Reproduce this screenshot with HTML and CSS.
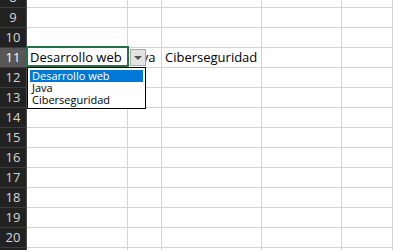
FILE: index.html
```html
<!DOCTYPE html>
<html lang="es">
<head>
  <meta charset="UTF-8">
  <meta name="viewport" content="width=device-width, initial-scale=1.0">
  <title>Hoja de cálculo - lista desplegable</title>
  <link rel="stylesheet" href="styles.css">
</head>
<body>
  <div class="sheet">
    <div class="row"><div class="rh">8</div><div class="c col-a"></div><div class="c col-b"></div><div class="c col-c"></div><div class="c col-d"></div><div class="c col-e"></div></div>
    <div class="row"><div class="rh">9</div><div class="c col-a"></div><div class="c col-b"></div><div class="c col-c"></div><div class="c col-d"></div><div class="c col-e"></div></div>
    <div class="row"><div class="rh">10</div><div class="c col-a"></div><div class="c col-b"></div><div class="c col-c"></div><div class="c col-d"></div><div class="c col-e"></div></div>

    <div class="row active">
      <div class="rh">11</div>
      <div class="c col-a">Desarrollo web</div>
      <div class="c col-b">Java</div>
      <div class="c col-c">Ciberseguridad</div>
      <div class="c col-d"></div>
      <div class="c col-e"></div>

      <!-- celda seleccionada + lista de validacion -->
      <div class="selection"></div>
      <div class="drop-btn"><span class="arrow"></span></div>
      <ul class="drop-list">
        <li class="selected">Desarrollo web</li>
        <li>Java</li>
        <li>Ciberseguridad</li>
      </ul>
    </div>

    <div class="row"><div class="rh">12</div><div class="c col-a"></div><div class="c col-b"></div><div class="c col-c"></div><div class="c col-d"></div><div class="c col-e"></div></div>
    <div class="row"><div class="rh">13</div><div class="c col-a"></div><div class="c col-b"></div><div class="c col-c"></div><div class="c col-d"></div><div class="c col-e"></div></div>
    <div class="row"><div class="rh">14</div><div class="c col-a"></div><div class="c col-b"></div><div class="c col-c"></div><div class="c col-d"></div><div class="c col-e"></div></div>
    <div class="row"><div class="rh">15</div><div class="c col-a"></div><div class="c col-b"></div><div class="c col-c"></div><div class="c col-d"></div><div class="c col-e"></div></div>
    <div class="row"><div class="rh">16</div><div class="c col-a"></div><div class="c col-b"></div><div class="c col-c"></div><div class="c col-d"></div><div class="c col-e"></div></div>
    <div class="row"><div class="rh">17</div><div class="c col-a"></div><div class="c col-b"></div><div class="c col-c"></div><div class="c col-d"></div><div class="c col-e"></div></div>
    <div class="row"><div class="rh">18</div><div class="c col-a"></div><div class="c col-b"></div><div class="c col-c"></div><div class="c col-d"></div><div class="c col-e"></div></div>
    <div class="row"><div class="rh">19</div><div class="c col-a"></div><div class="c col-b"></div><div class="c col-c"></div><div class="c col-d"></div><div class="c col-e"></div></div>
    <div class="row"><div class="rh">20</div><div class="c col-a"></div><div class="c col-b"></div><div class="c col-c"></div><div class="c col-d"></div><div class="c col-e"></div></div>
    <div class="row"><div class="rh">21</div><div class="c col-a"></div><div class="c col-b"></div><div class="c col-c"></div><div class="c col-d"></div><div class="c col-e"></div></div>
  </div>
</body>
</html>
```

FILE: styles.css
```css
html, body {
  margin: 0;
  padding: 0;
  background: #fff;
  overflow: hidden;
}
body {
  font-family: 'Open Sans', 'Noto Sans', sans-serif;
  color: #000;
  width: 393px;
  height: 250px;
}
.sheet {
  margin-top: -12px;
}
.row {
  display: flex;
  height: 20px;
}
.row.active {
  position: relative;
  z-index: 2;
}
.rh {
  width: 26px;
  flex: none;
  height: 19px;
  border-bottom: 1px solid #3b3b3b;
  border-right: 1px solid #4a4a4a;
  background: #222;
  color: #d6d6d6;
  font-size: 13px;
  line-height: 19px;
  text-align: center;
}
.active .rh {
  background: #575757;
  color: #fff;
}
.c {
  flex: none;
  height: 19px;
  border-bottom: 1px solid #d4d4d4;
  border-right: 1px solid #d4d4d4;
  font-size: 13px;
  line-height: 19px;
  padding-left: 3px;
  box-sizing: content-box;
  white-space: nowrap;
  overflow: hidden;
}
.col-a { width: 97px; }
.col-b { width: 30px; }
.col-c { width: 96px; }
.col-d { width: 76px; }
.col-e { flex: 1; }

.selection {
  position: absolute;
  left: 26px;
  top: -2px;
  width: 99px;
  height: 17px;
  border: 2px solid #217346;
}
.drop-btn {
  position: absolute;
  left: 130px;
  top: 1px;
  width: 14px;
  height: 15px;
  border: 1px solid #ababab;
  background: #e3e3e3;
}
.arrow {
  display: block;
  width: 0;
  height: 0;
  margin: 6px auto 0;
  border-left: 4px solid transparent;
  border-right: 4px solid transparent;
  border-top: 4px solid #555;
}
.drop-list {
  position: absolute;
  left: 27px;
  top: 19px;
  width: 113px;
  margin: 0;
  padding: 2px;
  list-style: none;
  background: #fff;
  border: 1px solid #000;
}
.drop-list li {
  height: 12px;
  line-height: 12px;
  font-size: 11px;
  padding-left: 2px;
  white-space: nowrap;
}
.drop-list li.selected {
  background: #0078d7;
  color: #fff;
}
```
